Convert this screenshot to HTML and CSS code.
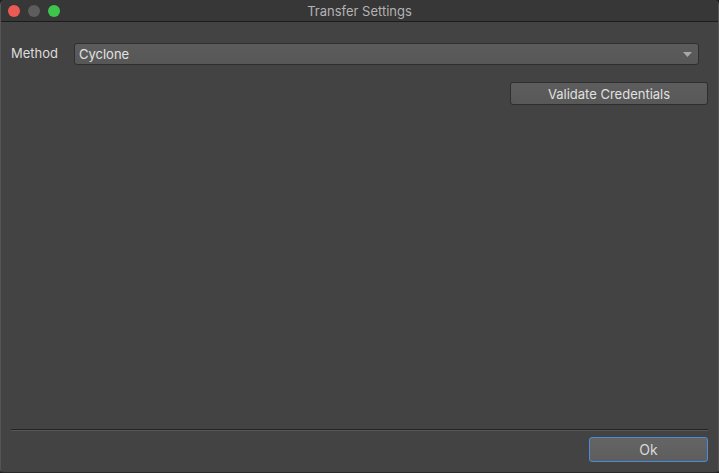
FILE: index.html
```html
<html>
	<head>
		<title>Transfer Settings</title>
		<link rel="stylesheet" href="styles.css">
	</head>
	<body>
		<div class="window">
			<div class="titlebar">
				<div class="lights">
					<span class="light red"></span>
					<span class="light gray"></span>
					<span class="light green"></span>
				</div>
				<div class="title">Transfer Settings</div>
			</div>
			<div class="content">
				<div class="row">
					<label class="label">Method</label>
					<div class="combo">
						<span>Cyclone</span>
						<svg class="arrow" width="9" height="5" viewBox="0 0 9 5"><path d="M0 0H9L4.5 5Z" fill="#a8a8a8"/></svg>
					</div>
				</div>
				<div class="actions">
					<button class="btn validate">Validate Credentials</button>
				</div>
				<div class="spacer"></div>
				<div class="separator"></div>
				<div class="footer">
					<button class="btn ok">Ok</button>
				</div>
			</div>
		</div>
	</body>
</html>
```

FILE: styles.css
```css
html, body {
	margin: 0;
	height: 100%;
	background: #1e1e1e;
	font: 13px Inter, 'Liberation Sans', sans-serif;
}
.window {
	width: 719px;
	height: 473px;
	box-sizing: border-box;
	display: flex;
	flex-direction: column;
	background: #434343;
	border-radius: 5px 5px 4px 4px;
	border: 1px solid #555;
	border-top: none;
	border-bottom-color: #2a2a2a;
	overflow: hidden;
}
.titlebar {
	height: 21px;
	flex: none;
	background: #373737;
	border-bottom: 1px solid #1c1c1c;
	display: flex;
	align-items: center;
	position: relative;
}
.lights {
	display: flex;
	gap: 8px;
	padding-left: 7px;
}
.light {
	width: 12px;
	height: 12px;
	border-radius: 50%;
}
.red { background: #ec5b53; }
.gray { background: #5d5d5d; }
.green { background: #3ec54b; }
.title {
	position: absolute;
	left: 0;
	right: 0;
	text-align: center;
	color: #b3b3b3;
	pointer-events: none;
}
.content {
	flex: 1;
	display: flex;
	flex-direction: column;
	padding: 20px 10px 10px 10px;
}
.row {
	display: flex;
	align-items: flex-start;
	gap: 16px;
}
.label {
	color: #dcdcdc;
	padding-top: 3px;
	line-height: 16px;
	width: 47px;
}
.combo {
	flex: 1;
	height: 22px;
	box-sizing: border-box;
	margin-right: 9px;
	margin-top: 1px;
	background: linear-gradient(#5c5c5c, #575757);
	border: 1px solid #2f2f2f;
	border-radius: 3px;
	display: flex;
	align-items: center;
	justify-content: space-between;
	padding: 0 6px 0 4px;
	color: #e2e2e2;
}
.actions {
	display: flex;
	justify-content: flex-end;
	margin-top: 17px;
}
.btn {
	font: inherit;
	color: #e0e0e0;
	background: linear-gradient(#5d5d5d, #585858);
	border: 1px solid #2e2e2e;
	border-radius: 3px;
	height: 23px;
	padding: 0;
}
.validate {
	width: 198px;
}
.spacer {
	flex: 1;
}
.separator {
	height: 1px;
	background: #232323;
	border-bottom: 1px solid #575757;
}
.footer {
	display: flex;
	justify-content: flex-end;
	margin-top: 6px;
}
.ok {
	width: 119px;
	height: 25px;
	border: 1px solid #4a8cdb;
	background: linear-gradient(#646464, #5e5e5e);
	color: #dadada;
	font-size: 14px;
}
```
